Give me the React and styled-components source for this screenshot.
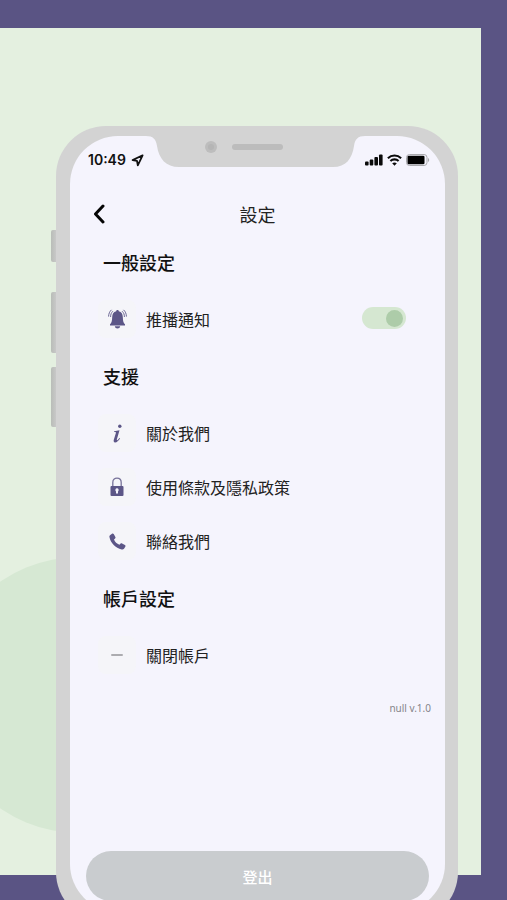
import React, { useState } from 'react';
import styled, { createGlobalStyle } from 'styled-components';

function CaiDat() {
  const [notify, setNotify] = useState(true);

  return (
    <Page>
      <GlobalStyle />
      <Panel>
        <Circle />
      </Panel>
      <Phone>
        <SideButton $top={104} $height={32} />
        <SideButton $top={166} $height={61} />
        <SideButton $top={241} $height={60} />
        <Screen>
          <StatusBar>
            <Clock>
              10:49
              <LocationIcon />
            </Clock>
            <Notch />
            <Indicators>
              <SignalIcon />
              <WifiIcon />
              <BatteryIcon />
            </Indicators>
          </StatusBar>

          <Header>
            <BackButton type="button" aria-label="返回">
              <svg width="12" height="20" viewBox="0 0 12 20" fill="none">
                <path d="M10 2 2.5 10 10 18" stroke="#050505" strokeWidth="3" strokeLinecap="round" strokeLinejoin="round" />
              </svg>
            </BackButton>
            <Title>設定</Title>
          </Header>

          <Main>
            <SectionTitle>一般設定</SectionTitle>
            <Row as="label" htmlFor="notify">
              <IconTile><BellIcon /></IconTile>
              <RowText>推播通知</RowText>
              <Toggle
                id="notify"
                type="checkbox"
                checked={notify}
                onChange={(e) => setNotify(e.target.checked)}
              />
            </Row>

            <SectionTitle>支援</SectionTitle>
            <Row href="#about">
              <IconTile><InfoIcon /></IconTile>
              <RowText>關於我們</RowText>
            </Row>
            <Row href="#terms">
              <IconTile><LockIcon /></IconTile>
              <RowText>使用條款及隱私政策</RowText>
            </Row>
            <Row href="#contact">
              <IconTile><PhoneIcon /></IconTile>
              <RowText>聯絡我們</RowText>
            </Row>

            <SectionTitle>帳戶設定</SectionTitle>
            <Row href="#close">
              <IconTile><MinusIcon /></IconTile>
              <RowText>關閉帳戶</RowText>
            </Row>
            <Version>null v.1.0</Version>
          </Main>

          <LogoutButton type="button">登出</LogoutButton>
        </Screen>
      </Phone>
    </Page>
  );
}

// ===================== Icons ===================== //

const LocationIcon = () => (
  <svg width="13" height="13" viewBox="0 0 13 13" fill="none">
    <path d="M11.6 1.4 1.6 6 6 6.8 6.8 11.4Z" stroke="#111" strokeWidth="1.8" strokeLinejoin="round" />
  </svg>
);

// The notch flares out into the bezel on both sides
const Notch = () => (
  <svg width="219" height="31" viewBox="0 0 219 31">
    <path d="M0 0C7 0 10 3 11 10C13 23 20 31 33 31H187C200 31 206 23 208 10C209 3 212 0 219 0Z" fill="#d3d3d3" />
    <circle cx="65" cy="11" r="6" fill="#bdbdbd" />
    <circle cx="65" cy="11" r="3" fill="#b5b5b5" />
    <rect x="86" y="8" width="51" height="6" rx="3" fill="#bcbcbc" />
  </svg>
);

const SignalIcon = () => (
  <svg width="18" height="12" viewBox="0 0 18 12" fill="#0a0a0a">
    <rect x="0" y="7.5" width="3.6" height="4" rx="1" />
    <rect x="4.7" y="5.5" width="3.6" height="6" rx="1" />
    <rect x="9.4" y="3" width="3.6" height="8.5" rx="1" />
    <rect x="14" y="0.5" width="3.6" height="11" rx="1" />
  </svg>
);

const WifiIcon = () => (
  <svg width="15" height="12" viewBox="0 0 15 12" fill="none" stroke="#0a0a0a" strokeWidth="2.1">
    <path d="M0.9 4.2C4.6 0.6 10.4 0.6 14.1 4.2" />
    <path d="M3.4 7C5.7 4.8 9.3 4.8 11.6 7" />
    <path d="M7.5 11.7 5.2 9.3C6.5 8.1 8.5 8.1 9.8 9.3Z" fill="#0a0a0a" stroke="none" />
  </svg>
);

const BatteryIcon = () => (
  <svg width="24" height="12" viewBox="0 0 24 12">
    <rect x="0.5" y="0.5" width="20.5" height="11" rx="3" fill="none" stroke="#a9a9ad" />
    <rect x="1.5" y="1.7" width="17" height="8.6" rx="1.3" fill="#000" />
    <path d="M22 4c1.6 0.5 1.6 3.5 0 4Z" fill="#a9a9ad" />
  </svg>
);

const BellIcon = () => (
  <svg width="19" height="20" viewBox="0 0 19 20">
    <path d="M9.5 1C10.3 1 10.7 1.5 10.8 2.2C13.6 2.8 14.7 5 14.8 8C14.9 12 15.5 14 17 15.3V16.5H2V15.3C3.5 14 4.1 12 4.2 8C4.3 5 5.4 2.8 8.2 2.2C8.3 1.5 8.7 1 9.5 1Z" fill="#5c5687" />
    <path d="M6.8 17.2H12.2C11.9 18.7 10.9 19.4 9.5 19.4S7.1 18.7 6.8 17.2Z" fill="#5c5687" />
    <path d="M2.6 7.6C2.6 5.4 3.2 3.9 4.6 2.5M0.6 7.2C0.7 4.6 1.5 2.7 3.2 1.1M16.4 7.6C16.4 5.4 15.8 3.9 14.4 2.5M18.4 7.2C18.3 4.6 17.5 2.7 15.8 1.1" fill="none" stroke="#6b6694" strokeWidth="1" strokeLinecap="round" />
  </svg>
);

const InfoIcon = () => (
  <svg width="11" height="19" viewBox="0 0 11 19" fill="#5c5687">
    <circle cx="7.8" cy="2.2" r="1.7" />
    <path d="M2.2 7.2 7.5 6.2 4.9 15.2C4.6 16.3 5 16.5 5.7 15.9L7.5 14 8.1 14.5C6.5 16.9 4.9 18.4 3.1 18.4C1.7 18.4 1.4 17.3 1.8 15.8L3.9 9C4.2 8.1 3.8 7.9 2 7.9Z" />
  </svg>
);

const LockIcon = () => (
  <svg width="14" height="20" viewBox="0 0 14 20">
    <path d="M2.8 9.5V5.5C2.8 2.8 4.6 1.1 7 1.1S11.2 2.8 11.2 5.5V9.5" fill="none" stroke="#77729a" strokeWidth="1.3" />
    <rect x="0.5" y="9" width="13" height="10" rx="1" fill="#5c5687" />
    <path d="M7 11.3a1.8 1.8 0 0 1 1 3.2V16.5H6V14.5A1.8 1.8 0 0 1 7 11.3Z" fill="#f5f4fd" />
  </svg>
);

const PhoneIcon = () => (
  <svg width="17" height="17" viewBox="0 0 17 17">
    <path d="M1 2.2 3 0.7C3.6 0.3 4.3 0.5 4.7 1.1L6.4 4C6.7 4.6 6.6 5.2 6.1 5.6L5 6.5C5.9 8.9 7.9 10.7 10.4 11.8L11.4 10.7C11.9 10.2 12.5 10.1 13.1 10.4L15.9 12.1C16.5 12.5 16.7 13.2 16.3 13.8L15 15.7C14.5 16.4 13.6 16.6 12.7 16.4C6.5 15 1.7 10 0.5 4.2C0.3 3.4 0.4 2.7 1 2.2Z" fill="#5c5687" />
  </svg>
);

const MinusIcon = () => (
  <svg width="12" height="2" viewBox="0 0 12 2">
    <rect width="12" height="2" rx="1" fill="#acacb0" />
  </svg>
);

// ===================== CSS styled-components ===================== //

const GlobalStyle = createGlobalStyle`
  * {
    box-sizing: border-box;
  }

  body {
    margin: 0;
    font-family: 'Noto Sans CJK TC', sans-serif;
  }

  svg {
    display: block;
    flex-shrink: 0;
  }
`;

const Page = styled.div`
  position: relative;
  height: 100vh;
  padding: 126px 49px 0 56px;
  background: #5a5484;
  overflow: hidden;
`;

const Panel = styled.div`
  position: absolute;
  inset: 28px 26px 25px 0;
  background: #e4f0e0;
  overflow: hidden;
`;

const Circle = styled.div`
  position: absolute;
  left: -59px;
  bottom: 42px;
  width: 276px;
  height: 276px;
  border-radius: 50%;
  background: #d6e8d3;
`;

const Phone = styled.div`
  position: relative;
  display: flex;
  min-height: calc(100vh - 104px);
  padding: 10px 13px 10px 14px;
  border-radius: 50px;
  background: #d3d3d3;
`;

const SideButton = styled.span`
  position: absolute;
  left: -5px;
  top: ${(props) => props.$top}px;
  width: 5px;
  height: ${(props) => props.$height}px;
  border-radius: 2px 0 0 2px;
  background: linear-gradient(to right, #b9bdb8, #c8c8c8);
`;

const Screen = styled.div`
  flex: 1;
  display: flex;
  flex-direction: column;
  border-radius: 48px;
  background: #f5f4fd;
  overflow: hidden;
`;

const StatusBar = styled.div`
  display: grid;
  grid-template-columns: 1fr 219px 1fr;
  height: 31px;
`;

const Clock = styled.div`
  display: flex;
  align-items: center;
  gap: 5px;
  padding: 16px 0 0 18px;
  font-family: Inter, sans-serif;
  font-size: 14px;
  line-height: 16px;
  font-weight: 600;
  color: #111;
`;

const Indicators = styled.div`
  display: flex;
  align-items: center;
  justify-content: flex-end;
  gap: 4px;
  padding: 16px 15px 0 0;
`;

const Header = styled.header`
  display: grid;
  grid-template-columns: 40px 1fr 40px;
  align-items: center;
  height: 36px;
  margin-top: 29px;
`;

const BackButton = styled.button`
  display: flex;
  justify-content: flex-end;
  padding: 0 5px 0 0;
  border: none;
  background: none;
  cursor: pointer;
`;

const Title = styled.h1`
  margin: 0;
  font-size: 18px;
  line-height: 24px;
  font-weight: 400;
  text-align: center;
  color: #222;
`;

const Main = styled.main`
  flex: 1;
  display: flex;
  flex-direction: column;
`;

const SectionTitle = styled.h2`
  margin: 0;
  padding-left: 33px;
  font-size: 18px;
  line-height: 60px;
  font-weight: 500;
  color: #111;
`;

const Row = styled.a`
  display: flex;
  align-items: center;
  gap: 10px;
  height: 54px;
  padding: 0 39px 0 28px;
  color: #222;
  text-decoration: none;
  cursor: pointer;
`;

const IconTile = styled.span`
  display: flex;
  align-items: center;
  justify-content: center;
  width: 38px;
  height: 38px;
  border-radius: 8px;
  background: #f5f5f9;
`;

const RowText = styled.span`
  flex: 1;
  font-size: 16px;
  line-height: 24px;
`;

const Toggle = styled.input`
  appearance: none;
  display: flex;
  align-items: center;
  justify-content: ${(props) => (props.checked ? 'flex-end' : 'flex-start')};
  width: 44px;
  height: 22px;
  margin: 0 0 2px;
  padding: 0 3px;
  border-radius: 11px;
  background: #d5e7d1;
  cursor: pointer;

  &::before {
    content: '';
    width: 17px;
    height: 17px;
    border-radius: 50%;
    background: #adcca9;
  }
`;

const Version = styled.p`
  margin: 0;
  padding-right: 14px;
  font-family: 'Noto Sans', sans-serif;
  font-size: 10px;
  line-height: 52px;
  text-align: right;
  color: #85858a;
`;

const LogoutButton = styled.button`
  height: 50px;
  margin: 0 16px 11px;
  border: none;
  border-radius: 25px;
  background: #c9cccf;
  font-family: inherit;
  font-size: 15px;
  font-weight: 500;
  color: #fff;
  cursor: pointer;
`;

export default CaiDat;
